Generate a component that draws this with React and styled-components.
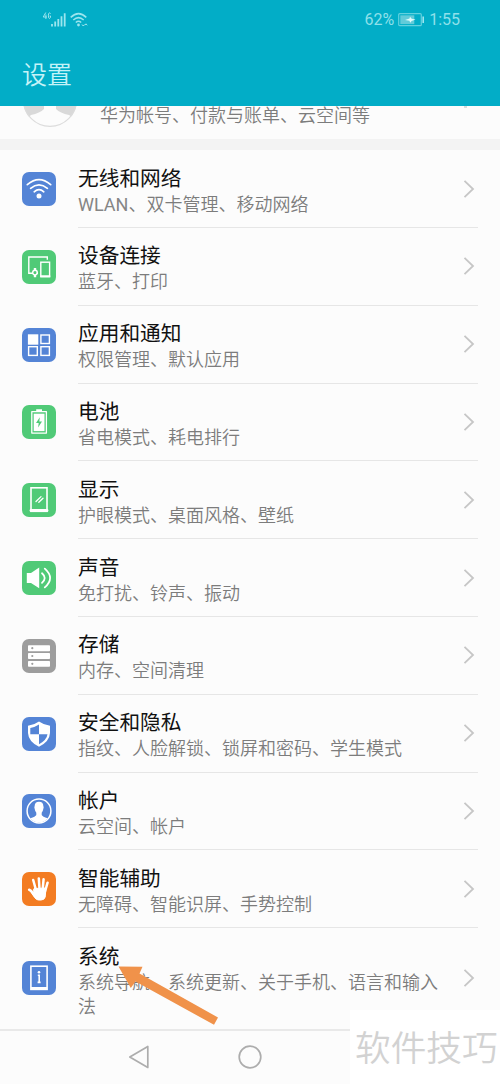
import React from "react";
import styled, { createGlobalStyle } from "styled-components";

const Global = createGlobalStyle`
  * { box-sizing: border-box; }
  body { margin: 0; background: #fcfcfc; }
`;

const Screen = styled.div`
  position: relative;
  display: flex;
  flex-direction: column;
  width: 500px;
  height: 1084px;
  overflow: hidden;
  background: #fcfcfc;
  font-family: Roboto, "Noto Sans CJK SC", sans-serif;
`;

const Header = styled.header`
  flex: none;
  height: 106px;
  background: #02adc7;
  color: #c4f3f8;
`;

const StatusBar = styled.div`
  display: flex;
  justify-content: space-between;
  align-items: center;
  height: 40px;
  padding: 0 40px 0 42px;
`;

const StatusGroup = styled.div`
  display: flex;
  align-items: center;
  gap: 4px;
  font-size: 16px;
  line-height: 20px;
  color: #8fe0ea;
`;

const Clock = styled.span`
  font-size: 16px;
`;

const PageTitle = styled.h1`
  margin: 0;
  padding: 18px 0 0 22px;
  font-size: 25px;
  line-height: 36px;
  font-weight: 350;
`;

const AccountRow = styled.div`
  display: flex;
  flex: none;
  height: 33px;
  padding-left: 22px;
`;

const AccountText = styled.div`
  margin: -3px 0 0 23px;
  font-size: 18px;
  line-height: 26px;
  font-weight: 350;
  color: #7c7c7c;
`;

const AccountEdge = styled.span`
  width: 3px;
  height: 2px;
  margin-left: 94px;
  background: #d8dcdc;
`;

const SectionGap = styled.div`
  flex: none;
  height: 11px;
  background: #f3f3f3;
`;

const List = styled.ul`
  flex: none;
  margin: 0;
  padding: 0.2px 0 0;
  list-style: none;
`;

const Row = styled.li`
  display: flex;
  align-items: center;
  height: ${(p) => (p.$last ? 100.4 : 77.8)}px;
  padding: 0 22px;
`;

const Tile = styled.svg`
  flex: none;
  display: block;
  width: 34px;
  height: 34px;
  border-radius: 7px;
  background: ${(p) => p.$color};
`;

const Body = styled.div`
  display: flex;
  flex: 1;
  align-items: center;
  justify-content: space-between;
  height: 100%;
  margin-left: 22px;
  border-bottom: ${(p) => (p.$last ? "0" : "1px solid #e6e6e6")};
`;

const Labels = styled.div`
  width: 366px;
  padding-top: ${(p) => (p.$last ? 6 : 5)}px;
`;

const Label = styled.div`
  font-size: 20.7px;
  line-height: 26px;
  color: #111;
`;

const Summary = styled.div`
  margin-top: 1px;
  font-size: 18px;
  line-height: 24px;
  font-weight: 350;
  color: #7c7c7c;
`;

const Latin = styled.span`
  font-weight: 400;
  color: #858585;
`;

const Chevron = styled.svg`
  flex: none;
  width: 12px;
  height: 20px;
  margin-right: 3px;
`;

const NavBar = styled.nav`
  display: flex;
  flex: 1;
  align-items: center;
  gap: 86px;
  padding-left: 127px;
  border-top: 2px solid #e9e9e9;
`;

const Watermark = styled.div`
  position: absolute;
  right: 0;
  bottom: 0;
  width: 150px;
  height: 74px;
  padding-left: 5px;
  background: #fff;
  color: #d2d2d2;
  font-size: 35.7px;
  font-weight: 350;
  line-height: 79px;
  white-space: nowrap;
`;

const Pointer = styled.svg`
  position: absolute;
  left: 110px;
  top: 960px;
`;

const stroke = { fill: "none", stroke: "#fff", strokeLinecap: "round", strokeLinejoin: "round" };

const icons = {
  wifi: (
    <g {...stroke} strokeWidth="1.7">
      <path d="M5.3 12.6Q17 2.8 28.7 12.6M8.6 16.3Q17 9.3 25.4 16.3M12.2 19.8Q17 15.6 21.8 19.8" />
      <circle cx="17" cy="24" r="2.5" fill="#fff" stroke="none" />
    </g>
  ),
  devices: (
    <g {...stroke} strokeLinecap="butt" strokeLinejoin="miter" strokeWidth="1.4">
      <path d="M11 23.3H6.8V7H25.3V9.8M14.5 23.3H16" />
      <rect x="18.8" y="12.2" width="8.8" height="14" />
      <path d="M18.2 26.4H28.3" strokeWidth="2" />
      <circle cx="13" cy="22.6" r="2.3" />
      <path d="M13 18V20.4M13 24.8V27.3" strokeWidth="2.4" />
    </g>
  ),
  apps: (
    <g {...stroke} strokeLinejoin="miter" strokeWidth="1.4">
      <rect x="6.6" y="7" width="9" height="9" fill="#fff" />
      <rect x="18.9" y="7" width="8.5" height="8.5" />
      <rect x="6.6" y="18.7" width="8.7" height="8.7" />
      <rect x="18.9" y="18.7" width="8.5" height="8.7" />
    </g>
  ),
  battery: (
    <g>
      <path d="M14.2 4.2H20V6H14.2Z" fill="#fff" />
      <rect x="9.8" y="6.7" width="14.6" height="21.4" {...stroke} strokeWidth="1.3" />
      <rect x="11.7" y="8.7" width="10.8" height="17.4" fill="#fff" />
      <path d="M17.8 12.2L14 18.1H16.7L16.1 22.4L20 16.4H17.3Z" fill="#50ca77" />
    </g>
  ),
  display: (
    <g {...stroke} strokeLinejoin="miter" strokeWidth="1.6">
      <rect x="9" y="4.8" width="16" height="23.5" />
      <path d="M9 27.5H25" strokeWidth="2.8" />
      <path d="M14 18.5L19 13.6M16.8 19.3L21 15.2" strokeWidth="1.3" />
    </g>
  ),
  sound: (
    <g {...stroke} strokeWidth="1.8">
      <path d="M4.8 12H9L17.2 6.6V27.2L9 22H4.8Z" fill="#fff" stroke="none" />
      <path d="M20 12.3Q25.4 17 20 21.8M22.8 7.6Q33.4 17 22.8 26.4" />
    </g>
  ),
  storage: (
    <g fill="#fff">
      {[6.3, 14.1, 21.9].map((y) => (
        <g key={y}>
          <rect x="6" y={y} width="22" height="5.9" rx="0.8" />
          <circle cx="10.3" cy={y + 2.9} r="1.1" fill="#9d9d9d" />
        </g>
      ))}
    </g>
  ),
  shield: (
    <g>
      <path d="M17 4.6Q22 8.2 28 8.8V16Q27.6 24.5 17 29.8Q6.4 24.5 6 16V8.8Q12 8.2 17 4.6Z" fill="#fff" />
      <path d="M17 7.5Q13 10.2 8.3 10.9V17.2H17Z" fill="#5484d6" />
      <path d="M17 17.2H25.5Q24.7 23 17 27.2Z" fill="#5484d6" />
    </g>
  ),
  account: (
    <g>
      <circle cx="17" cy="17" r="11.9" {...stroke} strokeWidth="1.5" />
      <path d="M12.6 12.2Q12.8 7.8 17 7.8Q21.2 7.8 21.4 12.2Q22 12.8 21.3 15Q20.8 17.6 19.7 18.7V21Q20.5 22.7 25.7 24.2Q22 28.5 17 28.5Q12 28.5 8.3 24.2Q13.5 22.7 14.3 21V18.7Q13.2 17.6 12.7 15Q12 12.8 12.6 12.2Z" fill="#fff" />
    </g>
  ),
  hand: (
    <g {...stroke}>
      <path d="M12.4 16.5L24 16L23.2 25Q22.4 28 19 28H16.5Q14.4 28 12.8 25.7L10.4 22.2Z" fill="#fff" />
      <path d="M11.2 8L14 18M16.8 6.4L17.5 17M21.6 7.2L20.7 17M25.6 10.7L23 19.5" strokeWidth="2.5" />
      <path d="M7.2 17.8Q9 18.4 10.3 20.6L13.3 24" strokeWidth="2.7" />
    </g>
  ),
  system: (
    <g {...stroke} strokeLinejoin="miter" strokeLinecap="butt" strokeWidth="1.6">
      <rect x="8.9" y="5.2" width="16.2" height="23.2" />
      <path d="M8.9 27.5H25.1" strokeWidth="2.8" />
      <path d="M15.8 14.3H17.2V21M15.6 21.4H18.6" strokeWidth="1.6" />
      <circle cx="17" cy="11.3" r="1.3" fill="#fff" stroke="none" />
    </g>
  ),
};

const BLUE = "#5484d6";
const GREEN = "#50ca77";

const items = [
  ["wifi", BLUE, "无线和网络", <><Latin>WLAN</Latin>、双卡管理、移动网络</>],
  ["devices", GREEN, "设备连接", "蓝牙、打印"],
  ["apps", BLUE, "应用和通知", "权限管理、默认应用"],
  ["battery", GREEN, "电池", "省电模式、耗电排行"],
  ["display", GREEN, "显示", "护眼模式、桌面风格、壁纸"],
  ["sound", GREEN, "声音", "免打扰、铃声、振动"],
  ["storage", "#9d9d9d", "存储", "内存、空间清理"],
  ["shield", BLUE, "安全和隐私", "指纹、人脸解锁、锁屏和密码、学生模式"],
  ["account", BLUE, "帐户", "云空间、帐户"],
  ["hand", "#f37c22", "智能辅助", "无障碍、智能识屏、手势控制"],
  ["system", BLUE, "系统", "系统导航、系统更新、关于手机、语言和输入法"],
];

function SignalIcons() {
  return (
    <svg width="48" height="20" viewBox="42 10 48 20" fill="none" stroke="#9be5ee">
      <path d="M45.8 12.5L43.2 17H47M45.9 14.5V19M50.6 13.6Q50 12.7 49.2 12.9Q48.4 13.2 48.4 15.8Q48.4 18.5 49.5 18.5Q50.6 18.3 50.6 16H49.6" strokeWidth="1" />
      <path d="M52 24V26.5M55.2 21.5V26.5M58.3 19V26.5M61.5 16.2V26.5M64.7 13.3V26.5" strokeWidth="1.8" />
      <path d="M70.7 17.4Q78.5 9.8 86.3 17.4M73.3 20Q78.5 15.2 83.7 20M75.8 22.5Q78.5 20.1 81.2 22.5" strokeWidth="1.5" />
      <circle cx="78.5" cy="25" r="1.4" fill="#9be5ee" stroke="none" />
      <path d="M82 24.5L83.2 26L84.4 24.5M84.8 25.3L86 23.8L87.2 25.3" strokeWidth="1" />
    </svg>
  );
}

function BatteryStatus() {
  return (
    <svg width="27" height="14" viewBox="0 0 27 14">
      <rect x="0.7" y="0.7" width="22.6" height="12" rx="1" fill="none" stroke="#62d1de" strokeWidth="1.2" />
      <rect x="2.3" y="2.3" width="14" height="8.8" fill="#62cbd9" />
      <path d="M7 6.9L11.5 5.6L12 3.8L13.7 5.7L17.5 6.4L13.6 8L12.3 9.8L11.4 7.8Z" fill="#e0fafa" />
      <path d="M25.2 3.5V10" stroke="#9be5ee" strokeWidth="1.6" />
    </svg>
  );
}

function Avatar() {
  return (
    <svg width="55" height="22" viewBox="22 106 55 22">
      <clipPath id="avatar-clip"><circle cx="50" cy="100" r="27" /></clipPath>
      <g clipPath="url(#avatar-clip)">
        <path d="M20 100H44V109Q40 113 31 115L20 125ZM56 100H80V122L69 115Q60 113 56 109Z" fill="#d9d9d9" />
      </g>
      <circle cx="50" cy="100" r="26.4" fill="none" stroke="#dcdcdc" strokeWidth="1.2" />
    </svg>
  );
}

export default function App() {
  return (
    <Screen>
      <Global />
      <Header>
        <StatusBar>
          <StatusGroup><SignalIcons /></StatusGroup>
          <StatusGroup>
            <span>62%</span>
            <BatteryStatus />
            <Clock>1:55</Clock>
          </StatusGroup>
        </StatusBar>
        <PageTitle>设置</PageTitle>
      </Header>
      <AccountRow>
        <Avatar />
        <AccountText>华为帐号、付款与账单、云空间等</AccountText>
        <AccountEdge />
      </AccountRow>
      <SectionGap />
      <List>
        {items.map(([icon, color, title, summary], i) => {
          const last = i === items.length - 1;
          return (
            <Row key={icon} $last={last}>
              <Tile $color={color} viewBox="0 0 34 34">{icons[icon]}</Tile>
              <Body $last={last}>
                <Labels $last={last}>
                  <Label>{title}</Label>
                  <Summary>{summary}</Summary>
                </Labels>
                <Chevron viewBox="0 0 12 20">
                  <path d="M1.5 1.8L10 10L1.5 18.2" fill="none" stroke="#c6c6c6" strokeWidth="1.8" />
                </Chevron>
              </Body>
            </Row>
          );
        })}
      </List>
      <NavBar>
        <svg width="24" height="26" viewBox="0 0 24 26">
          <path d="M20.8 2.5V23.5L2.8 13Z" fill="none" stroke="#adadad" strokeWidth="1.7" strokeLinejoin="round" />
        </svg>
        <svg width="26" height="26" viewBox="0 0 26 26">
          <circle cx="13" cy="13" r="10.8" fill="none" stroke="#adadad" strokeWidth="1.7" />
        </svg>
      </NavBar>
      <Watermark>软件技巧</Watermark>
      <Pointer width="112" height="70" viewBox="110 960 112 70">
        <path d="M118.5 966.5L142.5 966.7L139.5 973.5L218 1017.5L214 1024.8L135.5 981.5L130.8 988Z" fill="#f0924a" />
      </Pointer>
    </Screen>
  );
}
